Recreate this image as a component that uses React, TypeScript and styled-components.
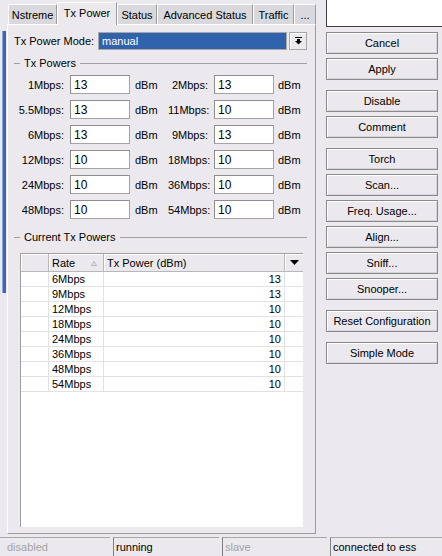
import React from 'react';
import styled, { createGlobalStyle } from 'styled-components';

const GlobalStyle = createGlobalStyle`
  html, body {
    margin: 0;
    padding: 0;
    background: #ebe9ed;
  }
`;

const rates: [string, string, string, string][] = [
  ['1Mbps:', '13', '2Mbps:', '13'],
  ['5.5Mbps:', '13', '11Mbps:', '10'],
  ['6Mbps:', '13', '9Mbps:', '13'],
  ['12Mbps:', '10', '18Mbps:', '10'],
  ['24Mbps:', '10', '36Mbps:', '10'],
  ['48Mbps:', '10', '54Mbps:', '10'],
];

const current: [string, string][] = [
  ['6Mbps', '13'],
  ['9Mbps', '13'],
  ['12Mbps', '10'],
  ['18Mbps', '10'],
  ['24Mbps', '10'],
  ['36Mbps', '10'],
  ['48Mbps', '10'],
  ['54Mbps', '10'],
];

const tabs = [
  { label: 'Nstreme', width: 49 },
  { label: 'Tx Power', width: 60, active: true },
  { label: 'Status', width: 40 },
  { label: 'Advanced Status', width: 96 },
  { label: 'Traffic', width: 41 },
  { label: '...', width: 22 },
];

const buttonGroups = [
  ['Cancel', 'Apply'],
  ['Disable', 'Comment'],
  ['Torch', 'Scan...', 'Freq. Usage...', 'Align...', 'Sniff...', 'Snooper...'],
  ['Reset Configuration'],
  ['Simple Mode'],
];

const status = [
  { text: 'disabled', dim: true, width: 110 },
  { text: 'running', width: 106 },
  { text: 'slave', dim: true, width: 105 },
  { text: 'connected to ess', width: 112 },
];

const DropIcon = () => (
  <svg width="7" height="8" viewBox="0 0 7 8">
    <rect x="0" y="0" width="7" height="1" fill="#000" />
    <rect x="2" y="2" width="3" height="2" fill="#000" />
    <polygon points="0,4 7,4 3.5,7.5" fill="#000" />
  </svg>
);

const App: React.FC = () => {
  return (
    <Window>
      <GlobalStyle />
      <EdgeMark />
      <Main>
        <LeftPane>
          <TabStrip>
            {tabs.map((t) => (
              <Tab key={t.label} $width={t.width} $active={!!t.active}>
                {t.label}
              </Tab>
            ))}
          </TabStrip>
          <TabPanel>
            <ModeRow>
              <ModeLabel>Tx Power Mode:</ModeLabel>
              <Select>manual</Select>
              <DropButton>
                <DropIcon />
              </DropButton>
            </ModeRow>

            <GroupHeader>
              <GroupDash />
              <GroupTitle>Tx Powers</GroupTitle>
              <GroupLine />
            </GroupHeader>

            <RateGrid>
              {rates.map(([l1, v1, l2, v2]) => (
                <React.Fragment key={l1}>
                  <RateLabel>{l1}</RateLabel>
                  <RateInput>{v1}</RateInput>
                  <Unit>dBm</Unit>
                  <RateLabel>{l2}</RateLabel>
                  <RateInput>{v2}</RateInput>
                  <Unit $second>dBm</Unit>
                </React.Fragment>
              ))}
            </RateGrid>

            <GroupHeader $spaced>
              <GroupDash />
              <GroupTitle>Current Tx Powers</GroupTitle>
              <GroupLine />
            </GroupHeader>

            <Table>
              <HeadRow>
                <HeadCell />
                <HeadCell>
                  Rate
                  <SortMark>
                    <svg width="6" height="5" viewBox="0 0 6 5">
                      <polygon points="3,0.5 5.5,4.5 0.5,4.5" fill="none" stroke="#b5b5b5" strokeWidth="1" />
                    </svg>
                  </SortMark>
                </HeadCell>
                <HeadCell>Tx Power (dBm)</HeadCell>
                <HeadCell $center>
                  <svg width="9" height="5" viewBox="0 0 9 5">
                    <polygon points="0,0 9,0 4.5,5" fill="#000" />
                  </svg>
                </HeadCell>
              </HeadRow>
              {current.map(([rate, power]) => (
                <BodyRow key={rate}>
                  <Cell />
                  <Cell>{rate}</Cell>
                  <Cell $right>{power}</Cell>
                  <Cell />
                </BodyRow>
              ))}
              <TableFill />
            </Table>
          </TabPanel>
        </LeftPane>

        <RightPane>
          <TopField />
          <ButtonStack>
            {buttonGroups.map((g, i) => (
              <ButtonGroup key={i}>
                {g.map((b) => (
                  <Button key={b}>{b}</Button>
                ))}
              </ButtonGroup>
            ))}
          </ButtonStack>
        </RightPane>
      </Main>

      <StatusBar>
        {status.map((s) => (
          <StatusCell key={s.text} $dim={!!s.dim} $width={s.width}>
            {s.text}
          </StatusCell>
        ))}
      </StatusBar>
    </Window>
  );
};

export default App;

const Window = styled.div`
  position: relative;
  display: flex;
  flex-direction: column;
  width: 442px;
  height: 556px;
  overflow: hidden;
  background: #ebe9ed;
  font-family: 'Liberation Sans', Arial, sans-serif;
  font-size: 11px;
  color: #000;
`;

/* blue edge of the window behind, peeking out on the left */
const EdgeMark = styled.div`
  position: absolute;
  left: 2px;
  top: 31px;
  width: 3px;
  height: 262px;
  background: #3a67b8;
  border-left: 1px solid #8aa6d8;
`;

const Main = styled.div`
  display: flex;
  height: 537px;
`;

const LeftPane = styled.div`
  display: flex;
  flex-direction: column;
  width: 309px;
  padding: 2px 0 0 7px;
`;

const TabStrip = styled.div`
  display: flex;
  align-items: flex-end;
  height: 23px;
  padding-left: 1px;
  margin-bottom: -1px;
  position: relative;
  z-index: 1;
`;

const Tab = styled.div<{ $width: number; $active: boolean }>`
  box-sizing: border-box;
  display: flex;
  align-items: center;
  justify-content: center;
  width: ${({ $width }) => $width}px;
  height: ${({ $active }) => ($active ? '23px' : '20px')};
  padding-bottom: ${({ $active }) => ($active ? '3px' : '0')};
  margin-bottom: ${({ $active }) => ($active ? '0' : '1px')};
  background: ${({ $active }) => ($active ? '#ebe9ed' : '#d9d8dd')};
  border-top: 1px solid #fff;
  border-left: 1px solid #fff;
  border-right: 1px solid #9c9c9c;
  white-space: nowrap;
`;

const TabPanel = styled.div`
  box-sizing: border-box;
  display: flex;
  flex-direction: column;
  width: 309px;
  height: 510px;
  padding: 7px 0 0 6px;
  border-top: 1px solid #fff;
  border-left: 1px solid #fff;
  border-right: 1px solid #9c9c9c;
  border-bottom: 1px solid #9c9c9c;
`;

const ModeRow = styled.div`
  display: flex;
  align-items: center;
  height: 18px;
`;

const ModeLabel = styled.div`
  width: 84px;
  white-space: nowrap;
`;

const Select = styled.div`
  box-sizing: border-box;
  display: flex;
  align-items: center;
  width: 189px;
  height: 18px;
  padding-left: 3px;
  background: #3163ad;
  color: #fff;
  border: 1px solid #a7a7a7;
`;

const DropButton = styled.div`
  box-sizing: border-box;
  display: flex;
  align-items: center;
  justify-content: center;
  width: 18px;
  height: 18px;
  margin-left: 2px;
  border: 1px solid #a7a7a7;
  box-shadow: inset 1px 1px 0 #fff;
`;

const GroupHeader = styled.div<{ $spaced?: boolean }>`
  display: flex;
  align-items: center;
  height: 12px;
  margin-top: ${({ $spaced }) => ($spaced ? '12px' : '7px')};
  margin-right: 8px;
`;

const GroupDash = styled.div`
  width: 6px;
  height: 1px;
  background: #a0a0a0;
`;

const GroupTitle = styled.div`
  padding: 0 4px 0 4px;
  white-space: nowrap;
`;

const GroupLine = styled.div`
  flex: 1;
  height: 1px;
  background: #a0a0a0;
`;

const RateGrid = styled.div`
  display: grid;
  grid-template-columns: 56px 60px 38px 46px 60px auto;
  grid-auto-rows: 19px;
  row-gap: 6px;
  margin-top: 6px;
  align-items: center;
`;

const RateLabel = styled.div`
  text-align: right;
  padding-right: 6px;
  white-space: nowrap;
`;

const RateInput = styled.div`
  box-sizing: border-box;
  display: flex;
  align-items: center;
  height: 19px;
  padding-left: 3px;
  background: #fff;
  font-size: 12px;
  border: 1px solid #a3a3a3;
  border-top-color: #8d8d8d;
  border-left-color: #8d8d8d;
`;

const Unit = styled.div<{ $second?: boolean }>`
  padding-left: ${({ $second }) => ($second ? '4px' : '5px')};
`;

const Table = styled.div`
  box-sizing: border-box;
  display: flex;
  flex-direction: column;
  width: 283px;
  height: 274px;
  margin: 10px 0 0 6px;
  background: #fff;
  border-left: 1px solid #a0a0a0;
  border-top: 1px solid #a0a0a0;
`;

const columns = '28px 55px 181px 1fr';

const HeadRow = styled.div`
  display: grid;
  grid-template-columns: ${columns};
  height: 18px;
  background: #ebe9ed;
`;

const HeadCell = styled.div<{ $center?: boolean }>`
  position: relative;
  display: flex;
  align-items: center;
  justify-content: ${({ $center }) => ($center ? 'center' : 'flex-start')};
  padding-left: ${({ $center }) => ($center ? '0' : '3px')};
  border-right: 1px solid #b8b8b8;
  border-bottom: 1px solid #b8b8b8;
  box-shadow: inset 1px 1px 0 #fff;
  &:last-child {
    border-right: none;
  }
`;

const SortMark = styled.span`
  position: absolute;
  right: 6px;
  top: 7px;
  display: flex;
`;

const BodyRow = styled.div`
  display: grid;
  grid-template-columns: ${columns};
  height: 15px;
`;

const Cell = styled.div<{ $right?: boolean }>`
  display: flex;
  align-items: center;
  justify-content: ${({ $right }) => ($right ? 'flex-end' : 'flex-start')};
  padding: 0 3px;
  border-right: 1px solid #e2e2e2;
  border-bottom: 1px solid #e2e2e2;
  &:last-child {
    border-right: none;
  }
`;

const TableFill = styled.div`
  flex: 1;
`;

const RightPane = styled.div`
  display: flex;
  flex-direction: column;
  width: 116px;
  margin-left: 10px;
`;

const TopField = styled.div`
  height: 26px;
  background: #fff;
  border-left: 1px solid #404040;
  border-bottom: 1px solid #404040;
`;

const ButtonStack = styled.div`
  display: flex;
  flex-direction: column;
  gap: 10px;
  width: 112px;
  margin-top: 5px;
`;

const ButtonGroup = styled.div`
  display: flex;
  flex-direction: column;
  gap: 4px;
`;

const Button = styled.div`
  box-sizing: border-box;
  display: flex;
  align-items: center;
  justify-content: center;
  height: 22px;
  background: #ebe9ed;
  border: 1px solid #8a8a8a;
  box-shadow: inset 1px 1px 0 #fff, inset -1px -1px 0 #d4d3d8;
  white-space: nowrap;
`;

const StatusBar = styled.div`
  display: flex;
  gap: 3px;
  height: 19px;
`;

const StatusCell = styled.div<{ $dim: boolean; $width: number }>`
  box-sizing: border-box;
  display: flex;
  align-items: center;
  width: ${({ $width }) => $width}px;
  flex-shrink: 0;
  padding-left: 2px;
  color: ${({ $dim }) => ($dim ? '#a3a3a3' : '#000')};
  border-top: 1px solid #a8a8a8;
  border-left: 1px solid #808080;
  &:first-child {
    padding-left: 7px;
    border-left: none;
  }
`;
